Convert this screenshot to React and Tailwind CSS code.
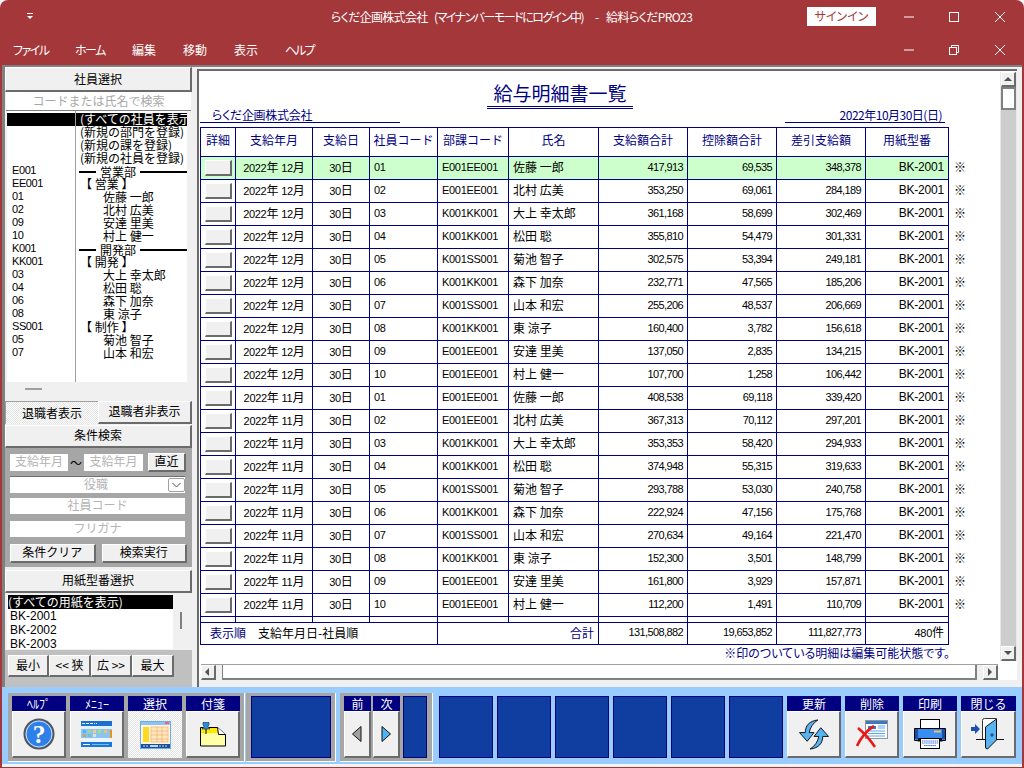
import React from 'react';

const people = [
  ['01', 'E001EE001', '佐藤 一郎'], ['02', 'E001EE001', '北村 広美'], ['03', 'K001KK001', '大上 幸太郎'],
  ['04', 'K001KK001', '松田 聡'], ['05', 'K001SS001', '菊池 智子'], ['06', 'K001KK001', '森下 加奈'],
  ['07', 'K001SS001', '山本 和宏'], ['08', 'K001KK001', '東 涼子'], ['09', 'E001EE001', '安達 里美'],
  ['10', 'E001EE001', '村上 健一'],
];

const pay = [
  ['417,913', '69,535', '348,378'], ['353,250', '69,061', '284,189'], ['361,168', '58,699', '302,469'],
  ['355,810', '54,479', '301,331'], ['302,575', '53,394', '249,181'], ['232,771', '47,565', '185,206'],
  ['255,206', '48,537', '206,669'], ['160,400', '3,782', '156,618'], ['137,050', '2,835', '134,215'],
  ['107,700', '1,258', '106,442'], ['408,538', '69,118', '339,420'], ['367,313', '70,112', '297,201'],
  ['353,353', '58,420', '294,933'], ['374,948', '55,315', '319,633'], ['293,788', '53,030', '240,758'],
  ['222,924', '47,156', '175,768'], ['270,634', '49,164', '221,470'], ['152,300', '3,501', '148,799'],
  ['161,800', '3,929', '157,871'], ['112,200', '1,491', '110,709'],
];

const tree = [
  ['', '(すべての社員を表示'], ['', '(新規の部門を登録)'], ['', '(新規の課を登録)'], ['', '(新規の社員を登録)'],
  ['E001', '営業部', 'dept'], ['EE001', '【 営業 】'], ['01', '佐藤 一郎', 'name'], ['02', '北村 広美', 'name'],
  ['09', '安達 里美', 'name'], ['10', '村上 健一', 'name'], ['K001', '開発部', 'dept'], ['KK001', '【 開発 】'],
  ['03', '大上 幸太郎', 'name'], ['04', '松田 聡', 'name'], ['06', '森下 加奈', 'name'], ['08', '東 涼子', 'name'],
  ['SS001', '【 制作 】'], ['05', '菊池 智子', 'name'], ['07', '山本 和宏', 'name'],
];

const raised = 'bg-[#f0f0f0] border-t border-l border-t-white border-l-white border-r-2 border-b-2 border-r-[#6b6b6b] border-b-[#6b6b6b]';
const pressed = 'bg-[repeating-conic-gradient(#ffffff_0_25%,#e4e4e4_0_50%)] bg-[length:2px_2px]';
const palt = "[font-feature-settings:'palt']";

function HelpIcon() {
  return (
    <svg width="32" height="32" viewBox="0 0 34 34">
      <circle cx="17" cy="17" r="15.5" fill="#2f7fe8" stroke="#555" strokeWidth="2" />
      <circle cx="17" cy="17" r="13.8" fill="none" stroke="#dfe8f5" strokeWidth="1" />
      <text x="17" y="27" textAnchor="middle" fontSize="27" fontWeight="700" fill="#fff" fontFamily="Liberation Serif, serif">?</text>
    </svg>
  );
}

function MenuIcon() {
  return (
    <svg width="32" height="27" viewBox="0 0 32 27">
      <rect x="0" y="0" width="31" height="26" fill="#fff" />
      <rect x="0" y="0" width="31" height="5" fill="#1b6fd0" />
      <path d="M1 2.500h3M5 2.500h3M9 2.500h3M13 2.500h1M15 2.500h1" stroke="#dcecff" />
      <rect x="0" y="5" width="31" height="3" fill="#e4eef8" />
      <rect x="0" y="8" width="31" height="9" fill="#8cc4f0" />
      <rect x="2" y="9" width="3" height="3" fill="#4fb0ff" />
      <rect x="7" y="9" width="3" height="3" fill="#9ad8a0" />
      <rect x="12" y="9" width="3" height="3" fill="#f0d080" />
      <rect x="17" y="9" width="3" height="3" fill="#a8e860" />
      <rect x="23" y="9" width="3" height="3" fill="#f0c070" />
      <rect x="2" y="13" width="3" height="3" fill="#d0a060" />
      <rect x="7" y="13" width="3" height="3" fill="#70c0d0" />
      <rect x="12" y="13" width="3" height="3" fill="#e0e0e0" />
      <rect x="29" y="9" width="2" height="9" fill="#f09020" />
      <rect x="0" y="17" width="31" height="4" fill="#eef4fb" />
      <rect x="0" y="21" width="31" height="5" fill="#1b78d8" />
      <rect x="2" y="23" width="7" height="1" fill="#fff" />
      <rect x="11" y="23" width="17" height="1" fill="#6fc0f0" />
    </svg>
  );
}

function SelectIcon() {
  return (
    <svg width="31" height="28" viewBox="0 0 31 28">
      <rect x="0.500" y="0.500" width="30" height="27" fill="#fff4e0" stroke="#6aaeea" />
      <rect x="1" y="1" width="29" height="3" fill="#8cc4f0" />
      <rect x="25" y="1" width="4" height="2" fill="#f06090" />
      <rect x="3" y="6" width="6" height="15" fill="#ffd820" />
      <rect x="11" y="6" width="17" height="15" fill="#ffe8c0" stroke="#f0b070" strokeWidth="0.700" />
      <path d="M11 10h17M11 14h17M11 18h17M17 6v15M22 6v15" stroke="#f0b070" strokeWidth="0.700" />
      <rect x="1" y="23" width="29" height="4" fill="#1b4f98" />
      <path d="M3 25h2M6 25h2M19 25h2M22 25h2M25 25h2" stroke="#bcd8f0" />
      <rect x="10" y="24" width="8" height="2" fill="#bcd8f0" />
    </svg>
  );
}

function NoteIcon() {
  return (
    <svg width="26" height="25" viewBox="0 0 26 25">
      <path d="M0.500 5.500h17l8 7v11.500h-25z" fill="#ffffa8" stroke="#000" />
      <path d="M1 6h16l1 5H1z" fill="#ffe800" />
      <path d="M17.500 5.500l1 7h7" fill="#fff" stroke="#000" />
      <path d="M3 0.500h6v2l-1 2 2 2.500H2l2-2.500-1-2z" fill="#2b8fd8" stroke="#124" strokeWidth="0.600" />
      <path d="M6 7v5" stroke="#000" />
    </svg>
  );
}

function RefreshIcon() {
  return (
    <svg width="32" height="31" viewBox="0 0 32 32">
      <path d="M20 1C11 2 7 7 7 14H1l8 9 7-9h-5c1-5 4-10 9-13z" fill="#58b4f0" stroke="#111" strokeWidth="1" />
      <path d="M12 31c9-1 13-6 13-13h6l-8-9-7 9h5c-1 5-4 10-9 13z" fill="#58b4f0" stroke="#111" strokeWidth="1" />
    </svg>
  );
}

function DeleteIcon() {
  return (
    <svg width="32" height="28" viewBox="0 0 32 28">
      <rect x="9.500" y="0.500" width="22" height="18" fill="#fff" stroke="#333" strokeDasharray="1 1" />
      <rect x="10" y="1" width="21" height="3" fill="#3a78c8" />
      <rect x="12" y="6" width="8" height="3" fill="#3a78c8" />
      <path d="M12 11h17M12 13.500h17M12 16h17M22 6h7M22 8h7" stroke="#58a8e8" strokeWidth="1" />
      <path d="M2 8c6 5 13 13 17 19" stroke="#e81818" strokeWidth="2.600" fill="none" />
      <path d="M18 6C11 10 4 19 1 26" stroke="#e81818" strokeWidth="2.600" fill="none" />
    </svg>
  );
}

function PrintIcon() {
  return (
    <svg width="32" height="30" viewBox="0 0 32 30">
      <rect x="6.500" y="0.500" width="19" height="9" fill="#fff" stroke="#000" />
      <path d="M0.500 9.500h31v12h-4v-2h-23v2h-4z" fill="#3a8df0" stroke="#000" />
      <rect x="1" y="10" width="3" height="10" fill="#1e4fa8" />
      <rect x="28" y="10" width="3" height="10" fill="#1e4fa8" />
      <rect x="20" y="11.500" width="7" height="2" fill="#e8c070" />
      <path d="M4.500 19.500h23l1 3h-25z" fill="#111" />
      <rect x="6.500" y="19.500" width="19" height="10" fill="#fff" stroke="#000" />
      <path d="M8 22h16M8 24h16M10 26.500h12" stroke="#3a6fe0" strokeWidth="1.200" strokeDasharray="1.500 0.600" />
    </svg>
  );
}

function CloseIcon() {
  return (
    <svg width="34" height="32" viewBox="0 0 34 32">
      <path d="M11.500 21V2.500q0-2 2-2h11.500" fill="#fff" stroke="#333" />
      <path d="M25.500 0.500v19" stroke="#333" />
      <path d="M14.500 29V9L25.500 1v21l-9 9q-2 0-2-2z" fill="#58b4f0" stroke="#111" />
      <path d="M0 9h4V6l5 5-5 5v-3H0z" fill="#1e4fb0" />
      <path d="M5 21.500h9M26 21.500h7" stroke="#111" />
      <path d="M19 17h4M21 15v4" stroke="#123a80" />
    </svg>
  );
}

function ToolButton({ label, width, children, active }) {
  return (
    <div className={`${width} flex flex-col h-[62px]`}>
      <div className="h-[15px] bg-[#000080] text-white text-center leading-[15px] text-[12px] whitespace-nowrap">{label}</div>
      <div className={`flex-1 flex items-center justify-center ${active ? pressed : raised}`}>{children}</div>
    </div>
  );
}

function BluePanel({ width }) {
  return <div className={`${width} h-[62px] bg-[#0f3da0] border border-[#000080]`} />;
}

function Frame({ width, gap, children }) {
  return (
    <div className={`${width} ${gap} h-[69px] flex bg-[#a6a6a6] border-r border-b border-white pt-[3px] pl-[4px]`}>
      {children}
    </div>
  );
}

function SectionButton({ size, children }) {
  return <div className={`${raised} ${size} text-[12px] text-center text-black`}>{children}</div>;
}

function SmallArrow({ up, left, right }) {
  let points = '';
  if (up) points = '1,6 9,6 5,2';
  if (left) points = '6,0 6,8 2,4';
  if (right) points = '3,0 3,8 7,4';
  if (!points) points = '1,2 9,2 5,6';
  return (
    <svg width="10" height="8" viewBox="0 0 10 8">
      <polygon points={points} fill="#505050" />
    </svg>
  );
}

function EmployeeTree() {
  return (
    <div className="ml-[2px] w-[180px] h-[271px] pt-[2px] bg-white flex flex-col relative text-[12px] text-black">
      <div className="absolute left-[68px] top-0 bottom-0 w-px bg-[#a0a0a0]" />
      {tree.map((row, i) => (
        <div key={i} className={`h-[13px] leading-[11px] flex shrink-0 whitespace-nowrap overflow-hidden ${i === 0 ? 'bg-black text-white' : ''}`}>
          <div className="w-[70px] pl-[5px] shrink-0 [font-family:'Liberation_Sans',sans-serif] text-[11px] tracking-[-0.4px]">{row[0]}</div>
          {row[2] === 'dept' ? (
            <div className="flex-1 flex items-center gap-[4px] pl-[2px]">
              <span className="w-[17px] h-[2px] bg-black" />
              <span>{row[1]}</span>
              <span className="flex-1 h-[2px] bg-black" />
            </div>
          ) : (
            <div className={row[2] === 'name' ? 'pl-[26px]' : 'pl-[3px]'}>{row[1]}</div>
          )}
        </div>
      ))}
    </div>
  );
}

function LeftPanel() {
  return (
    <div className="w-[187px] shrink-0 flex flex-col bg-[#f0f0f0]">
      <SectionButton size="h-[25px] leading-[21px]">社員選択</SectionButton>
      <div className="h-[19px] bg-white border-b border-[#808080] mx-[1px] text-center text-[12px] leading-[18px] text-[#a8a8a8]">コードまたは氏名で検索</div>
      <EmployeeTree />
      <div className="h-[19px] pl-[20px] pt-[6px]"><div className="w-[17px] h-[2px] bg-[#a0a0a0]" /></div>
      <div className="flex h-[23px] text-[12px] text-black text-center">
        <div className={`w-[93px] leading-[21px] border-t border-l border-[#a0a0a0] ${pressed}`}>退職者表示</div>
        <div className={`${raised} flex-1 leading-[17px]`}>退職者非表示</div>
      </div>
      <div className="mt-[1px]"><SectionButton size="h-[23px] leading-[18px]">条件検索</SectionButton></div>
      <div className="h-[119px] bg-[#a6a6a6] px-[5px] pt-[5px] text-[12px] text-[#b4b4b4]">
        <div className="flex items-center h-[19px]">
          <div className="w-[58px] h-[17px] bg-white text-center leading-[14px]">支給年月</div>
          <div className="w-[16px] text-center text-black">〜</div>
          <div className="w-[59px] h-[17px] bg-white text-center leading-[14px]">支給年月</div>
          <div className={`${raised} ml-[5px] w-[38px] h-[19px] text-center text-black leading-[14px]`}>直近</div>
        </div>
        <div className="mt-[4px] w-[175px] h-[17px] bg-white border-t border-[#707070] flex">
          <div className="flex-1 text-center leading-[14px] pl-[14px]">役職</div>
          <div className="w-[17px] h-[14px] mt-[1px] border border-[#a0a0a0] rounded-[2px] flex items-center justify-center">
            <svg width="9" height="6" viewBox="0 0 9 6"><path d="M0.500 1l4 4 4-4" fill="none" stroke="#505050" /></svg>
          </div>
        </div>
        <div className="mt-[5px] w-[175px] h-[16px] bg-white text-center leading-[13px]">社員コード</div>
        <div className="mt-[7px] w-[175px] h-[16px] bg-white text-center leading-[13px]">フリガナ</div>
        <div className="mt-[7px] flex gap-[6px] text-black">
          <div className={`${raised} w-[86px] h-[19px] text-center leading-[14px]`}>条件クリア</div>
          <div className={`${raised} w-[86px] h-[19px] text-center leading-[14px]`}>検索実行</div>
        </div>
      </div>
      <div className="mt-[3px]"><SectionButton size="h-[23px] leading-[18px]">用紙型番選択</SectionButton></div>
      <div className="mt-[2px] h-[54px] flex bg-white ml-[2px] text-[12px] text-black leading-[14px] overflow-hidden">
        <div className="w-[166px] pl-[1px]">
          <div className="bg-black text-white h-[14px]">(すべての用紙を表示)</div>
          <div className="pl-[2px] [font-family:'Liberation_Sans',sans-serif]">BK-2001</div>
          <div className="pl-[2px] [font-family:'Liberation_Sans',sans-serif]">BK-2002</div>
          <div className="pl-[2px] [font-family:'Liberation_Sans',sans-serif]">BK-2003</div>
        </div>
        <div className="flex-1 bg-[#f0f0f0] pt-[17px] pl-[7px]"><div className="w-[2px] h-[17px] bg-[#808080]" /></div>
      </div>
      <div className="flex-1 mt-[1px] flex items-start bg-[#c0c0c0] pl-[3px] pt-[5px] text-[12px] text-black text-center">
        <div className={`${raised} w-[41px] h-[22px] leading-[18px]`}>最小</div>
        <div className={`${raised} w-[42px] h-[22px] leading-[18px]`}>&lt;&lt; 狭</div>
        <div className={`${raised} w-[41px] h-[22px] leading-[18px]`}>広 &gt;&gt;</div>
        <div className={`${raised} w-[42px] h-[22px] leading-[18px]`}>最大</div>
      </div>
    </div>
  );
}

function PayTable() {
  const th = 'border border-[#000080] font-normal text-[#000080] text-[12px] pb-[4px]';
  const td = 'border border-[#000080] px-[4px] pb-[2px] whitespace-nowrap';
  const code = "[font-family:'Liberation_Sans',sans-serif] text-[11px] tracking-[-0.3px]";
  const num = "[font-family:'Liberation_Sans',sans-serif] text-[11px] tracking-[-0.6px]";
  const type = "[font-family:'Liberation_Sans',sans-serif] text-[12px] tracking-[-0.2px]";
  return (
    <table className="table-fixed border-collapse w-[767px] text-[12px] text-black">
      <colgroup>
        <col className="w-[35px]" />
        <col className="w-[77px]" />
        <col className="w-[57px]" />
        <col className="w-[68px]" />
        <col className="w-[71px]" />
        <col className="w-[90px]" />
        <col className="w-[89px]" />
        <col className="w-[89px]" />
        <col className="w-[89px]" />
        <col className="w-[83px]" />
        <col className="w-[19px]" />
      </colgroup>
      <thead>
        <tr className="h-[29px]">
          <th className={th}>詳細</th>
          <th className={th}>支給年月</th>
          <th className={th}>支給日</th>
          <th className={th}>社員コード</th>
          <th className={th}>部課コード</th>
          <th className={th}>氏名</th>
          <th className={th}>支給額合計</th>
          <th className={th}>控除額合計</th>
          <th className={th}>差引支給額</th>
          <th className={th}>用紙型番</th>
          <th />
        </tr>
      </thead>
      <tbody>
        {pay.map((p, i) => {
          const person = people[i % 10];
          return (
            <tr key={i} className={`h-[23px] ${i === 0 ? 'bg-[#ccffcc]' : ''}`}>
              <td className="border border-[#000080] px-[4px]"><div className={`${raised} w-[27px] h-[16px]`} /></td>
              <td className={`${td} text-center`}><span className={code}>2022</span>年 <span className={code}>{i < 10 ? '12' : '11'}</span>月</td>
              <td className={`${td} text-center`}><span className={code}>30</span>日</td>
              <td className={`${td} ${code}`}>{person[0]}</td>
              <td className={`${td} ${code}`}>{person[1]}</td>
              <td className={td}>{person[2]}</td>
              <td className={`${td} text-right ${num}`}>{p[0]}</td>
              <td className={`${td} text-right ${num}`}>{p[1]}</td>
              <td className={`${td} text-right ${num}`}>{p[2]}</td>
              <td className={`${td} text-right ${type}`}>BK-2001</td>
              <td className="bg-white pl-[5px] pb-[2px] text-[12px] font-bold">※</td>
            </tr>
          );
        })}
        <tr className="h-[6px]">
          <td className="border border-[#000080]" />
          <td className="border border-[#000080]" />
          <td className="border border-[#000080]" />
          <td className="border border-[#000080]" />
          <td className="border border-[#000080]" />
          <td className="border border-[#000080]" />
          <td className="border border-[#000080]" />
          <td className="border border-[#000080]" />
          <td className="border border-[#000080]" />
          <td className="border border-[#000080]" />
          <td />
        </tr>
        <tr className="h-[22px]">
          <td colSpan={4} className={`${td} pl-[9px]`}>
            <span className="text-[#000080]">表示順</span>
            <span className="ml-[12px]">支給年月日-社員順</span>
          </td>
          <td colSpan={2} className={`${td} text-right text-[#000080]`}>合計</td>
          <td className={`${td} text-right ${num}`}>131,508,882</td>
          <td className={`${td} text-right ${num}`}>19,653,852</td>
          <td className={`${td} text-right ${num}`}>111,827,773</td>
          <td className={`${td} text-right`}><span className={code}>480</span>件</td>
          <td />
        </tr>
      </tbody>
    </table>
  );
}

function ReportPanel() {
  return (
    <div className="flex-1 flex flex-col min-w-0 mt-[2px] border-t-2 border-l-2 border-[#6b6b6b] bg-white">
      <div className="flex-1 flex min-h-0">
        <div className="flex-1 min-w-0 pl-[1px] flex flex-col">
          <div className="w-[768px] h-[52px] flex items-end">
            <div className={`w-[200px] border-b border-[#000080] pl-[12px] text-[12px] leading-[15px] tracking-[-0.3px] text-[#000080] ${palt}`}>らくだ企画株式会社</div>
            <div className="ml-[87px] mb-[14px] w-[146px] border-b-[3px] border-double border-[#000080] text-center text-[19px] leading-[26px] text-[#000080]">給与明細書一覧</div>
            <div className="ml-[152px] w-[160px] border-b border-[#000080] pr-[3px] text-right text-[12px] leading-[15px] tracking-[-0.5px] text-[#000080]">2022年10月30日(日)</div>
          </div>
          <div className="mt-[4px]"><PayTable /></div>
          <div className={`w-[768px] pr-[18px] mt-[1px] text-right text-[12px] leading-[14px] text-[#000080] ${palt}`}>※印のついている明細は編集可能状態です。</div>
        </div>
        <div className="w-[17px] mt-[1px] mb-[3px] bg-[#cdcdcd] border-x border-[#e8e8e8] flex flex-col">
          <div className={`${raised} h-[15px] flex items-center justify-center`}><SmallArrow up /></div>
          <div className="h-[23px] bg-white border-2 border-[#808080]" />
          <div className="flex-1" />
          <div className={`${raised} h-[15px] flex items-center justify-center`}><SmallArrow /></div>
        </div>
      </div>
      <div className="h-[16px] ml-[2px] mr-[19px] flex gap-[6px] bg-[#f0f0f0] border-t border-[#a0a0a0]">
        <div className={`${raised} w-[15px] flex items-center justify-center`}><SmallArrow left /></div>
        <div className="flex-1 bg-white border-b-2 border-r-2 border-l border-[#808080]" />
        <div className={`${raised} w-[15px] flex items-center justify-center`}><SmallArrow right /></div>
      </div>
      <div className="h-[7px] bg-[#f0f0f0]" />
    </div>
  );
}

function Toolbar() {
  return (
    <div className="h-[77px] shrink-0 bg-[#99ccff] pl-[6px] pt-[6px] flex">
      <Frame width="w-[237px]" gap="gap-[4px]">
        <ToolButton label="ﾍﾙﾌﾟ" width="w-[54px]"><HelpIcon /></ToolButton>
        <ToolButton label="ﾒﾆｭｰ" width="w-[54px]"><MenuIcon /></ToolButton>
        <ToolButton label="選択" width="w-[54px]" active><SelectIcon /></ToolButton>
        <ToolButton label="付箋" width="w-[54px]"><NoteIcon /></ToolButton>
      </Frame>
      <div className="w-[1px]" />
      <Frame width="w-[90px] pl-[5px]" gap="gap-[4px]"><BluePanel width="w-[80px]" /></Frame>
      <div className="w-[4px]" />
      <Frame width="w-[93px]" gap="gap-[2px]">
        <ToolButton label="前" width="w-[27px]">
          <svg width="10" height="16" viewBox="0 0 10 16"><polygon points="9,0.500 9,15.500 0.500,8" fill="#a0a0a0" stroke="#111" /></svg>
        </ToolButton>
        <ToolButton label="次" width="w-[27px]">
          <svg width="10" height="16" viewBox="0 0 10 16"><polygon points="1,0.500 1,15.500 9.500,8" fill="#4fb4f4" stroke="#111" /></svg>
        </ToolButton>
        <div className="ml-[1px]"><BluePanel width="w-[24px]" /></div>
      </Frame>
      <div className="ml-[6px] mt-[3px] flex gap-[4px] items-start">
        <BluePanel width="w-[54px]" />
        <BluePanel width="w-[54px]" />
        <BluePanel width="w-[54px]" />
        <BluePanel width="w-[54px]" />
        <BluePanel width="w-[54px]" />
        <BluePanel width="w-[54px]" />
        <ToolButton label="更新" width="w-[54px]"><RefreshIcon /></ToolButton>
        <ToolButton label="削除" width="w-[54px]"><DeleteIcon /></ToolButton>
        <ToolButton label="印刷" width="w-[54px]"><PrintIcon /></ToolButton>
        <ToolButton label="閉じる" width="w-[55px]"><CloseIcon /></ToolButton>
      </div>
    </div>
  );
}

function WindowButtons({ max }) {
  return (
    <div className="flex-1 flex pl-[9px]">
      <div className="w-[46px] flex justify-center pl-[2px]">
        <svg width="12" height="12" viewBox="0 0 12 12"><path d="M1 6h10" stroke="#fff" /></svg>
      </div>
      <div className="w-[46px] flex justify-center">
        {max ? (
          <svg width="12" height="12" viewBox="0 0 12 12"><rect x="1.500" y="1.500" width="9" height="9" fill="none" stroke="#fff" /></svg>
        ) : (
          <svg width="12" height="12" viewBox="0 0 12 12"><rect x="1.500" y="3.500" width="7" height="7" fill="none" stroke="#fff" /><path d="M3.500 3.500v-2h7v7h-2" fill="none" stroke="#fff" /></svg>
        )}
      </div>
      <div className="w-[46px] flex justify-center">
        <svg width="12" height="12" viewBox="0 0 12 12"><path d="M1 1l10 10M11 1L1 11" stroke="#fff" /></svg>
      </div>
    </div>
  );
}

export default function App() {
  return (
    <div className="w-[1024px] h-[768px] overflow-hidden bg-[#f4f4f4] font-['Noto_Sans_CJK_JP',sans-serif]">
      <div className="h-full rounded-t-lg bg-[#a4373a] flex flex-col overflow-hidden">
        <div className="h-[33px] shrink-0 flex items-center text-white text-[12px]">
          <div className="w-[60px] pl-[27px]">
            <svg width="7" height="7" viewBox="0 0 7 7"><path d="M0 0.500h6" stroke="#fff" /><polygon points="0,3 6,3 3,6" fill="#fff" /></svg>
          </div>
          <div className={`w-[747px] pl-[271px] flex whitespace-nowrap ${palt}`}>
            <span className="w-[103px] tracking-[-0.7px]">らくだ企画株式会社</span>
            <span className="w-[161px] tracking-[-1.5px]">(マイナンバーモードにログイン中)</span>
            <span className="w-[11px]">-</span>
            <span className="tracking-[-0.6px]">給料らくだPRO23</span>
          </div>
          <div className={`w-[69px] h-[19px] bg-white text-[#a4373a] text-center leading-[18px] ${palt}`}>サインイン</div>
          <WindowButtons max />
        </div>
        <div className="h-[32px] shrink-0 flex items-center pt-[1px] text-white text-[12px]">
          <div className={`w-[876px] flex pl-[13px] ${palt}`}>
            <span className="w-[62px] tracking-[-1.5px]">ファイル</span>
            <span className="w-[57px] tracking-[-1.5px]">ホーム</span>
            <span className="w-[51px]">編集</span>
            <span className="w-[51px]">移動</span>
            <span className="w-[51px]">表示</span>
            <span className="tracking-[-2px]">ヘルプ</span>
          </div>
          <WindowButtons />
        </div>
        <div className="flex-1 mx-[2px] bg-[#f0f0f0] flex flex-col min-h-0">
          <div className="flex-1 flex min-h-0 border-t-2 border-[#808080]">
            <div className="w-[3px] bg-[#808080]" />
            <LeftPanel />
            <div className="w-[5px]" />
            <ReportPanel />
            <div className="w-[5px]" />
          </div>
          <Toolbar />
          <div className="h-[3px] shrink-0 bg-[#f4f4f4]" />
        </div>
        <div className="h-[1px] shrink-0" />
      </div>
    </div>
  );
}
